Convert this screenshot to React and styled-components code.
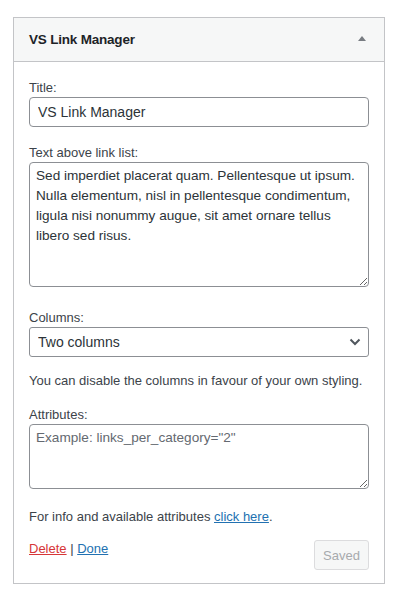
import React from "react";
import styled, { createGlobalStyle } from "styled-components";

const GlobalStyle = createGlobalStyle`
  body {
    margin: 0;
    background: #ffffff;
    font-family: "Liberation Sans", Arial, sans-serif;
    color: #3c434a;
  }
`;

const Page = styled.div`
  padding: 17px 15px 0 13px;
  width: 372px;
`;

const Widget = styled.div`
  border: 1px solid #c3c4c7;
  background: #fff;
`;

const WidgetTop = styled.div`
  display: flex;
  align-items: center;
  justify-content: space-between;
  height: 43px;
  padding: 0 18px 0 15px;
  background: #f6f7f7;
  border-bottom: 1px solid #c3c4c7;
`;

const WidgetTitle = styled.h3`
  margin: 0;
  font-size: 13.5px;
  font-weight: 700;
  letter-spacing: -0.2px;
  color: #1d2327;
`;

const Caret = styled.span`
  width: 0;
  height: 0;
  margin-top: -3px;
  border-left: 4px solid transparent;
  border-right: 4px solid transparent;
  border-bottom: 5px solid #787c82;
`;

const WidgetInside = styled.div`
  display: flex;
  flex-direction: column;
  padding: 17px 15px 13px;
`;

const Field = styled.div`
  display: flex;
  flex-direction: column;
  margin-bottom: ${(p) => p.$gap || 17}px;
`;

const Label = styled.label`
  display: block;
  font-size: 13px;
  line-height: 18px;
`;

const TextInput = styled.input`
  box-sizing: border-box;
  width: 100%;
  height: 30px;
  margin: 0;
  padding: 0 8px;
  border: 1px solid #8c8f94;
  border-radius: 4px;
  font-family: inherit;
  font-size: 14px;
  color: #2c3338;
  background: #fff;
  outline: none;
`;

const TextArea = styled.textarea`
  display: block;
  box-sizing: border-box;
  width: 100%;
  height: ${(p) => p.$h}px;
  margin: 0;
  padding: 3px 6px 2px;
  border: 1px solid #8c8f94;
  border-radius: 4px;
  font-family: inherit;
  font-size: 13.6px;
  line-height: 20px;
  color: #2c3338;
  background: #fff;
  resize: vertical;
  outline: none;
  overflow: hidden;

  &::placeholder {
    color: #646970;
  }
`;

const SelectWrap = styled.div`
  position: relative;
`;

const Select = styled.select`
  box-sizing: border-box;
  width: 100%;
  height: 30px;
  margin: 0;
  padding: 0 24px 0 8px;
  border: 1px solid #8c8f94;
  border-radius: 3px;
  font-family: inherit;
  font-size: 14px;
  color: #2c3338;
  background: #fff;
  appearance: none;
  outline: none;
`;

const Chevron = styled.svg`
  position: absolute;
  right: 8px;
  top: 11px;
  pointer-events: none;
`;

const Help = styled.p`
  margin: 0 0 ${(p) => p.$gap || 16}px;
  font-size: 13px;
  line-height: 18px;
`;

const Link = styled.a`
  color: ${(p) => (p.$danger ? "#d63638" : "#2271b1")};
  text-decoration: underline;
`;

const Actions = styled.div`
  display: flex;
  justify-content: space-between;
  align-items: flex-start;
`;

const ControlLinks = styled.div`
  font-size: 13px;
  line-height: 18px;
`;

const SaveButton = styled.button`
  box-sizing: border-box;
  width: 55px;
  height: 30px;
  padding: 0;
  border: 1px solid #dcdcde;
  border-radius: 3px;
  background: #f6f7f7;
  color: #a7aaad;
  font-family: inherit;
  font-size: 13px;
`;

const intro =
  "Sed imperdiet placerat quam. Pellentesque ut ipsum. Nulla elementum, nisl in pellentesque condimentum, ligula nisi nonummy augue, sit amet ornare tellus libero sed risus.";

export default function App() {
  return (
    <>
      <GlobalStyle />
      <Page>
        <Widget>
          <WidgetTop>
            <WidgetTitle>VS Link Manager</WidgetTitle>
            <Caret />
          </WidgetTop>
          <WidgetInside>
            <Field>
              <Label>Title:</Label>
              <TextInput defaultValue="VS Link Manager" />
            </Field>
            <Field $gap={22}>
              <Label>Text above link list:</Label>
              <TextArea $h={125} defaultValue={intro} />
            </Field>
            <Field $gap={15}>
              <Label>Columns:</Label>
              <SelectWrap>
                <Select defaultValue="two">
                  <option value="one">One column</option>
                  <option value="two">Two columns</option>
                </Select>
                <Chevron width="12" height="8" viewBox="0 0 12 8">
                  <path d="M1.5 1.5 L6 6 L10.5 1.5" fill="none" stroke="#50575e" strokeWidth="2" />
                </Chevron>
              </SelectWrap>
            </Field>
            <Help>You can disable the columns in favour of your own styling.</Help>
            <Field $gap={19}>
              <Label>Attributes:</Label>
              <TextArea $h={65} placeholder={'Example: links_per_category="2"'} />
            </Field>
            <Help $gap={14}>
              For info and available attributes <Link href="#">click here</Link>.
            </Help>
            <Actions>
              <ControlLinks>
                <Link href="#" $danger>Delete</Link> | <Link href="#">Done</Link>
              </ControlLinks>
              <SaveButton disabled>Saved</SaveButton>
            </Actions>
          </WidgetInside>
        </Widget>
      </Page>
    </>
  );
}
